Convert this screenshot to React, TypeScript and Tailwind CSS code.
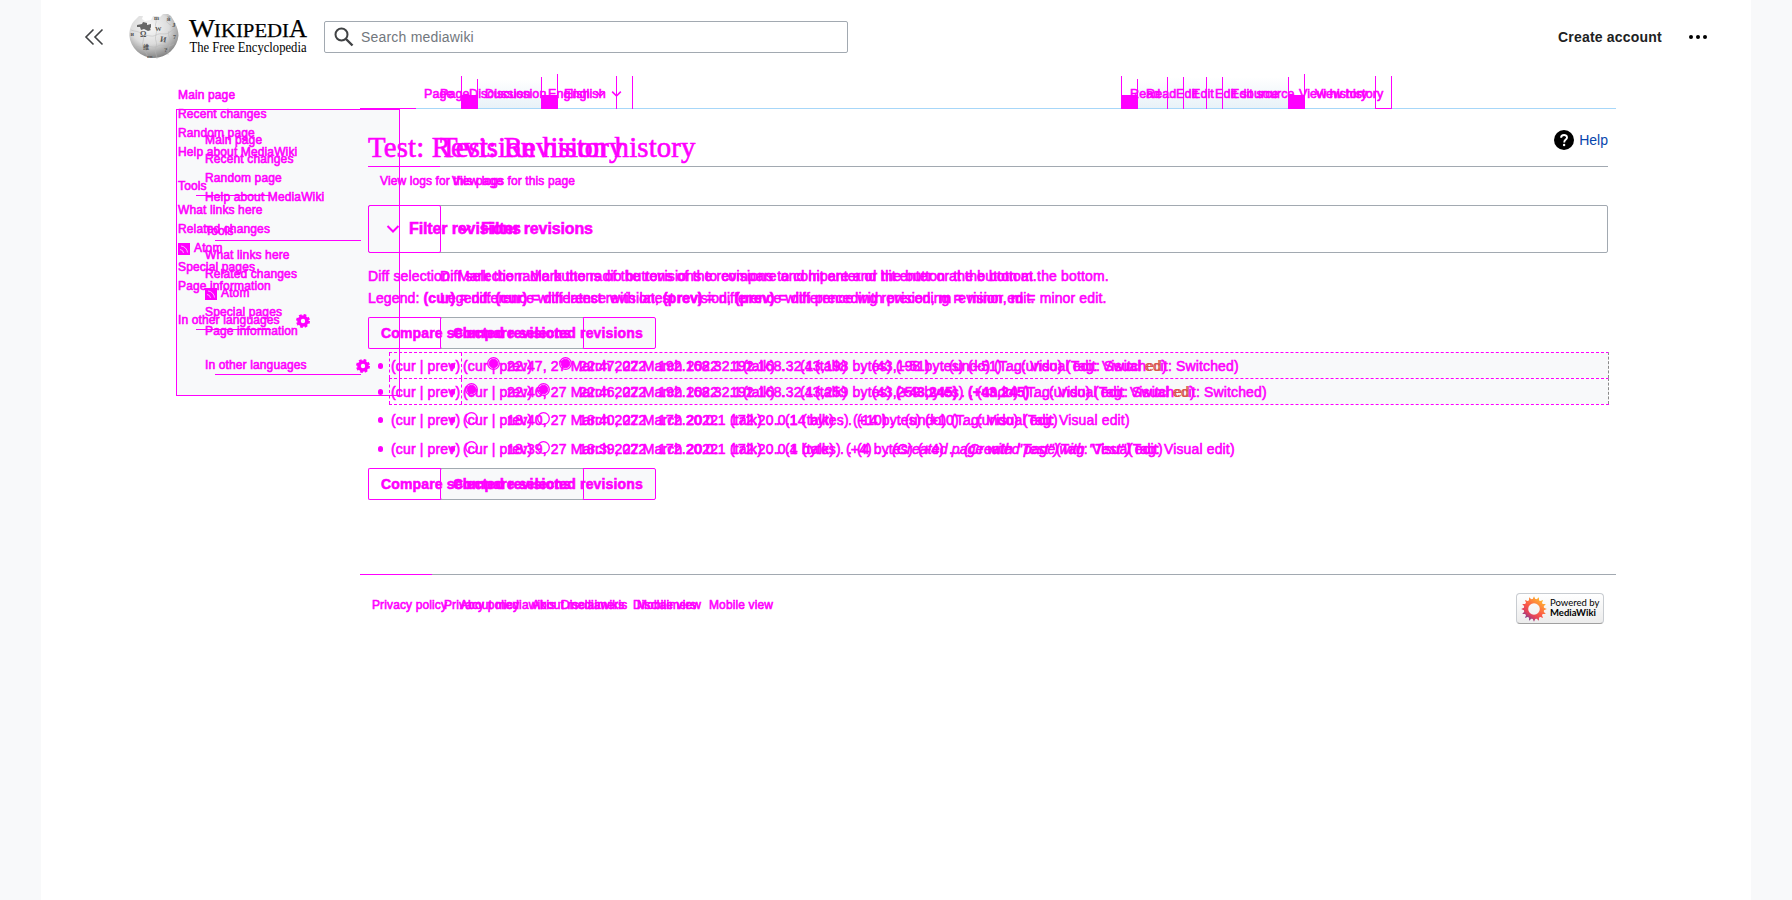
import React from "react";

const INK = "text-[#ff00ff] [-webkit-text-stroke:0.6px_#ff00ff] whitespace-pre";

function Stack({ children, className = "" }: { children: React.ReactNode; className?: string }) {
  return <div className={`grid [&>*]:col-start-1 [&>*]:row-start-1 ${className}`}>{children}</div>;
}

/* Draws the same content twice, the second copy moved right by the column shift. */
function Twice({ children, className = "" }: { children: React.ReactNode; className?: string }) {
  return (
    <Stack className={`${INK} ${className}`}>
      <div>{children}</div>
      <div className="ml-[72px]">{children}</div>
    </Stack>
  );
}

function Globe() {
  return (
    <svg width="50" height="48" viewBox="0 0 50 48" className="shrink-0">
      <defs>
        <radialGradient id="globe" cx="0.42" cy="0.3" r="0.7">
          <stop offset="0" stopColor="#f8f8f8" />
          <stop offset="0.55" stopColor="#dcdcdc" />
          <stop offset="1" stopColor="#858585" />
        </radialGradient>
      </defs>
      <path d="M5 8l5-5 4 0-1 3 3 2 6-1 2-4 4 0 3 1 3-3 5 0 3 2C45 8 49.500 15 49.500 22.500A24.700 24.700 0 0 1 .3 22.500C.3 16 2.500 11 5 8Z" fill="url(#globe)" />
      <path d="M8 12l5-1 1-2 4 1v2l4-1v3l-1 2 1 1-3 1-4-2-3 1-1-3-3 0Z" fill="#666" />
      <g fill="none" stroke="#b4b4b4" strokeWidth="0.5">
        <path d="M2 17c5 2 10 1 12 6s-3 9 1 14 3 6 4 8M14 23c6-2 8 2 13-1s9 1 14-3 4-3 7-3M27 22c-2 5 2 7 0 12s1 8 1 12M5 34c5-2 6 2 11 0s9 2 13-1 8 3 16-2M26 6c3 3-1 5 1 8s0 5 0 8M40 18c-2 6 3 8 1 13s-2 6-2 11M38 5c-2 3 1 6 4 7" />
      </g>
      <g fill="#555" fontFamily="Liberation Serif, serif" fontWeight="bold" fontSize="8">
        <text x="11" y="24">Ω</text>
        <text x="26" y="18" fontSize="6.500">W</text>
        <text x="31" y="29" fontSize="8" transform="rotate(10 34 27)">И</text>
        <text x="1.500" y="23" fontSize="6">и</text>
        <text x="43" y="14" fontSize="7">J</text>
        <text x="35" y="39" fontSize="7">?</text>
        <text x="44" y="26" fontSize="6">7</text>
        <text x="38" y="8" fontSize="6">й</text>
        <text x="25" y="7" fontSize="6">m</text>
        <text x="14" y="36" fontSize="6" fontFamily="Noto Sans CJK SC, sans-serif">维</text>
        <text x="18" y="45" fontSize="5">un</text>
      </g>
    </svg>
  );
}

function Wordmark() {
  return (
    <svg width="120" height="42" viewBox="0 0 120 42" className="ml-[10px] shrink-0 overflow-visible" fontFamily="Liberation Serif, serif" fill="#000">
      <g stroke="#000" strokeWidth="0.25">
        <text x="0" y="20.500" fontSize="24.500" textLength="26" lengthAdjust="spacingAndGlyphs">W</text>
        <text x="25" y="20.500" fontSize="18.500" textLength="75" lengthAdjust="spacingAndGlyphs">IKIPEDI</text>
        <text x="100" y="20.500" fontSize="24.500" textLength="18" lengthAdjust="spacingAndGlyphs">A</text>
      </g>
      <text x="0.500" y="35.500" fontSize="14" textLength="117" lengthAdjust="spacingAndGlyphs">The Free Encyclopedia</text>
    </svg>
  );
}

function Header() {
  return (
    <header className="flex h-[74px] items-center">
      <svg width="20" height="20" viewBox="0 0 20 20" fill="none" stroke="#404244" strokeWidth="1.600" className="ml-[43px] shrink-0">
        <path d="M9.500 2.500 2 10l7.500 7.500M18.500 2.500 11 10l7.500 7.500" />
      </svg>
      <div className="ml-[25px] flex items-center">
        <Globe />
        <Wordmark />
      </div>
      <div className="ml-[15px] flex h-8 w-[524px] shrink-0 items-center rounded-[2px] border border-[#a2a9b1] pl-[9px]">
        <svg width="20" height="20" viewBox="0 0 20 20" fill="none" stroke="#404244" strokeWidth="2">
          <circle cx="7.500" cy="7.500" r="6" />
          <path d="m12 12 6.500 6.500" strokeWidth="2.400" />
        </svg>
        <span className="ml-[7px] text-[14px] leading-5 tracking-[0.200px] text-[#72777d]">Search mediawiki</span>
      </div>
      <a className="ml-[710px] shrink-0 text-[14px] leading-5 font-bold tracking-[0.200px] whitespace-nowrap text-[#202122]">Create account</a>
      <svg width="20" height="20" viewBox="0 0 20 20" className="ml-[26px] shrink-0">
        <circle cx="3" cy="10" r="2" />
        <circle cx="10" cy="10" r="2" />
        <circle cx="17" cy="10" r="2" />
      </svg>
    </header>
  );
}

function Gear() {
  return (
    <svg width="14" height="14" viewBox="0 0 14 14" fill="none" stroke="#ff00ff">
      <circle cx="7" cy="7" r="4" strokeWidth="3.600" />
      <circle cx="7" cy="7" r="6" strokeWidth="2" strokeDasharray="2.700 2" />
    </svg>
  );
}

function Feed() {
  return (
    <svg width="12" height="12" viewBox="0 0 12 12" className="mr-1">
      <rect width="12" height="12" fill="#ff00ff" />
      <path d="M2 6.500A4 4 0 0 1 5.500 10M3 3a7 7 0 0 1 6.500 6.500" fill="none" stroke="#f8f9fa" strokeWidth="0.700" />
    </svg>
  );
}

function NavList({ gearGap }: { gearGap: string }) {
  return (
    <nav className={`text-[12px] leading-[19px] tracking-[0.130px] ${INK}`}>
      <div>Main page</div>
      <div>Recent changes</div>
      <div>Random page</div>
      <div>Help about MediaWiki</div>
      <div className="mt-[15px] mb-[5px]">Tools</div>
      <div>What links here</div>
      <div>Related changes</div>
      <div className="flex items-center"><Feed />Atom</div>
      <div>Special pages</div>
      <div>Page information</div>
      <div className="mt-[15px] flex items-center">
        <span>In other languages</span>
        <span className={gearGap}><Gear /></span>
      </div>
    </nav>
  );
}

function Sidebar() {
  return (
    <aside className="absolute top-[85px] left-[135px]">
      <Stack>
        <div className="mt-6 flex h-[287px] w-[224px] flex-col border border-[#ff00ff] bg-[#f8f9fa]">
          <div className="mt-[85px] ml-[19px] h-px w-[75px] bg-[#ff00ff]" />
          <div className="mt-[44px] ml-[38px] h-px w-[146px] bg-[#ff00ff]" />
          <div className="mt-[88px] ml-[19px] h-px w-[75px] bg-[#ff00ff]" />
          <div className="mt-[44px] ml-[38px] h-px w-[146px] bg-[#ff00ff]" />
        </div>
        <div className="mt-px ml-[2px]"><NavList gearGap="ml-[16px]" /></div>
        <div className="mt-[46px] ml-[29px]"><NavList gearGap="ml-[49px]" /></div>
      </Stack>
    </aside>
  );
}

function Cell({ w, h, fill = "" }: { w: string; h: string; fill?: string }) {
  return (
    <div className={`flex shrink-0 flex-col justify-end border-l border-[#ff00ff] ${w} ${h}`}>
      {fill === "solid" && <div className="h-[14px] bg-[#ff00ff]" />}
      {fill === "fade" && <div className="mb-px h-full bg-linear-to-b from-white to-[#e8f2f8]" />}
      {fill === "foot" && <div className="h-px bg-[#ff00ff]" />}
    </div>
  );
}

function Down({ className }: { className: string }) {
  return (
    <svg width="14" height="10" viewBox="0 0 14 10" fill="none" stroke="#ff00ff" strokeWidth="2" className={className}>
      <path d="m1.500 2 5.500 5.500L12.500 2" />
    </svg>
  );
}

function LeftLabels() {
  return (
    <div className="flex items-center text-[12.500px] leading-[16px] tracking-[0.100px]">
      <span className="w-[45px]">Page</span>
      <span className="w-[79px]">Discussion</span>
      <span>English</span>
      <Down className="ml-[5px] h-[8px] w-[11px]" />
    </div>
  );
}

function RightLabels() {
  return (
    <div className="flex text-[12.500px] leading-[16px] tracking-[0.100px]">
      <span className="w-[46px]">Read</span>
      <span className="w-[39px]">Edit</span>
      <span className="w-[82px]">Edit source</span>
      <span className="ml-0.5">View history</span>
    </div>
  );
}

function Tabs() {
  return (
    <div className="flex h-[35px] items-end">
      <Stack className="w-full">
        <div className="flex items-end">
          <div className="h-px w-[56px] bg-[#ff00ff]" />
          <div className="h-px flex-1 bg-[#a7d7f9]" />
        </div>
        <div className="flex items-end">
          <div className="ml-[101px] flex items-end">
            <Cell w="w-[16px]" h="h-[33px]" fill="solid" />
            <Cell w="w-[64px]" h="h-[30px]" fill="fade" />
            <Cell w="w-[16px]" h="h-[32px]" fill="solid" />
            <Cell w="w-[59px]" h="h-[35px]" />
            <Cell w="w-[16px]" h="h-[33px]" />
            <Cell w="w-[1px]" h="h-[33px]" />
          </div>
          <div className="ml-[488px] flex items-end">
            <Cell w="w-[16px]" h="h-[33px]" fill="solid" />
            <Cell w="w-[30px]" h="h-[30px]" fill="fade" />
            <Cell w="w-[16px]" h="h-[32px]" fill="fade" />
            <Cell w="w-[23px]" h="h-[32px]" fill="fade" />
            <Cell w="w-[16px]" h="h-[32px]" fill="fade" />
            <Cell w="w-[66px]" h="h-[32px]" fill="fade" />
            <Cell w="w-[16px]" h="h-[32px]" fill="solid" />
            <Cell w="w-[71px]" h="h-[35px]" />
            <Cell w="w-[16px]" h="h-[33px]" fill="foot" />
            <Cell w="w-[1px]" h="h-[33px]" />
          </div>
        </div>
        <Stack className={`items-start pt-[12px] pl-[64px] ${INK}`}>
          <LeftLabels />
          <div className="ml-[16px]"><LeftLabels /></div>
        </Stack>
        <Stack className={`items-start pt-[12px] pl-[770px] ${INK}`}>
          <RightLabels />
          <div className="ml-[16px]"><RightLabels /></div>
        </Stack>
      </Stack>
    </div>
  );
}

function Rule({ w }: { w: string }) {
  return (
    <div className="flex h-px">
      <div className="w-[72px] bg-[#ff00ff]" />
      <div className={`bg-[#a2a9b1] ${w}`} />
    </div>
  );
}

function CompareButton() {
  return (
    <Stack className={`h-[32px] text-[14px] leading-[30px] font-bold tracking-[0.150px] ${INK}`}>
      <div className="ml-[72px] w-[216px] rounded-[2px] border border-[#ff00ff] bg-[#f8f9fa]" />
      <div className="ml-[73px] w-[142px] border-y border-[#a2a9b1]" />
      <div className="w-[216px] rounded-[2px] border border-[#ff00ff] border-y-transparent">
        <span className="ml-3">Compare selected revisions</span>
      </div>
      <div className="w-[73px] rounded-l-[2px] border-y border-[#ff00ff]" />
      <div className="pt-px pl-[85px]">Compare selected revisions</div>
    </Stack>
  );
}

type Part = { text: string; w: string };
type Revision = { radio: string; filled: boolean; parts: Part[]; switched: boolean; height: string };

const REVISIONS: Revision[] = [
  {
    radio: "ml-[25px] mr-[7px] mb-[5px]", filled: true, switched: true, height: "h-[26px]",
    parts: [
      { text: "22:47, 27 March 2022", w: "w-[151px]" },
      { text: "192.168.32.1", w: "w-[85px]" },
      { text: "(talk)", w: "w-[38px]" },
      { text: ". .", w: "w-[19px]" },
      { text: "(43,198 bytes)", w: "w-[96px]" },
      { text: "(−51)", w: "w-[37px]" },
      { text: ". .", w: "w-[16px]" },
      { text: "(undo)", w: "w-[45px]" },
    ],
  },
  {
    radio: "ml-[3px] mr-[29px] mb-[5px]", filled: true, switched: true, height: "h-[26px]",
    parts: [
      { text: "22:46, 27 March 2022", w: "w-[151px]" },
      { text: "192.168.32.1", w: "w-[85px]" },
      { text: "(talk)", w: "w-[38px]" },
      { text: ". .", w: "w-[19px]" },
      { text: "(43,259 bytes)", w: "w-[96px]" },
      { text: "(+43,245)", w: "w-[65px] font-bold" },
      { text: ". .", w: "w-[16px]" },
      { text: "(undo)", w: "w-[45px]" },
    ],
  },
  {
    radio: "ml-[3px] mr-[29px] mb-[3px]", filled: false, switched: false, height: "h-[29px]",
    parts: [
      { text: "18:40, 27 March 2022", w: "w-[151px]" },
      { text: "172.20.0.1", w: "w-[72px]" },
      { text: "(talk)", w: "w-[38px]" },
      { text: ". .", w: "w-[17px]" },
      { text: "(14 bytes)", w: "w-[68px]" },
      { text: "(+10)", w: "w-[37px]" },
      { text: ". .", w: "w-[15px]" },
      { text: "(undo)", w: "w-[46px]" },
    ],
  },
  {
    radio: "ml-[3px] mr-[29px] mb-[3px]", filled: false, switched: false, height: "h-[29px]",
    parts: [
      { text: "18:39, 27 March 2022", w: "w-[151px]" },
      { text: "172.20.0.1", w: "w-[72px]" },
      { text: "(talk)", w: "w-[38px]" },
      { text: ". .", w: "w-[17px]" },
      { text: "(4 bytes)", w: "w-[61px]" },
      { text: "(+4)", w: "w-[31px]" },
      { text: ". .", w: "w-[15px]" },
      { text: "(Created page with \"Test\")", w: "w-[164px] italic" },
    ],
  },
];

function Unchanged({ children }: { children: React.ReactNode }) {
  return <span className="text-[#d9534f] [-webkit-text-stroke:0px]">{children}</span>;
}

function Tag({ switched, second }: { switched: boolean; second: boolean }) {
  if (!switched) return <span>(Tag: Visual edit)</span>;
  return second
    ? <span>(Tag: Visual <Unchanged>ed</Unchanged>it: Switched)</span>
    : <span>(Tag: Visual edit: Switch<Unchanged>ed</Unchanged>)</span>;
}

function Radio({ filled, className }: { filled: boolean; className: string }) {
  return (
    <svg width="13" height="13" viewBox="0 0 13 13" fill="none" stroke="#ff00ff" className={`shrink-0 ${className}`}>
      <circle cx="6.500" cy="6.500" r="5.800" strokeWidth="1.300" />
      {filled && <circle cx="6.500" cy="6.500" r="4.300" fill="#ff00ff" />}
    </svg>
  );
}

function RevisionLine({ rev, second }: { rev: Revision; second: boolean }) {
  return (
    <div className={`flex items-center ${rev.height}`}>
      <span className="ml-[10px] h-[6px] w-[5px] rounded-full bg-[#ff00ff]" />
      <span className="ml-[8px] w-[71px]">(cur | prev)</span>
      <Radio filled={rev.filled} className={rev.radio} />
      {rev.parts.map((p, i) => (
        <span key={i} className={`shrink-0 ${p.w}`}>{p.text}</span>
      ))}
      <Tag switched={rev.switched} second={second} />
    </div>
  );
}

function DashedBand() {
  return (
    <div className="ml-[21px] flex h-[26px] w-[1220px] border-t border-r border-dashed border-t-[#ff00ff] border-r-[#8a8a8a]">
      <div className="w-[72px] border-l border-dashed border-[#ff00ff]" />
      <div className="flex-1 border-l border-dashed border-[#ff00ff] bg-[#f8f9fa]" />
    </div>
  );
}

function History() {
  return (
    <Stack className={`mt-[3px] h-[116px] text-[14px] leading-5 tracking-[0.150px] ${INK}`}>
      <div>
        <DashedBand />
        <DashedBand />
        <div className="ml-[21px] w-[1220px] border-t border-dashed border-[#ff00ff]" />
      </div>
      <div className="pt-px">
        {REVISIONS.map((rev, i) => <RevisionLine key={i} rev={rev} second={false} />)}
      </div>
      <div className="ml-[72px] pt-px">
        {REVISIONS.map((rev, i) => <RevisionLine key={i} rev={rev} second />)}
      </div>
    </Stack>
  );
}

function Sunflower() {
  const petals = Array.from({ length: 16 }, (_, i) => i * 22.5);
  return (
    <svg width="26" height="26" viewBox="-13 -13 26 26">
      <defs>
        <linearGradient id="sun" gradientUnits="userSpaceOnUse" x1="8" y1="-9" x2="-7" y2="11">
          <stop offset="0" stopColor="#ffb52e" />
          <stop offset="0.5" stopColor="#fb5a48" />
          <stop offset="0.75" stopColor="#e0405c" />
          <stop offset="1" stopColor="#6a3f9c" />
        </linearGradient>
        <mask id="petals" maskUnits="userSpaceOnUse" x="-13" y="-13" width="26" height="26">
          {petals.map((a) => <path key={a} d="M-2.600-7 0-12.800 2.600-7Z" fill="#fff" transform={`rotate(${a})`} />)}
          <circle r="8" fill="none" stroke="#fff" strokeWidth="4.400" />
        </mask>
      </defs>
      <rect x="-13" y="-13" width="26" height="26" fill="url(#sun)" mask="url(#petals)" />
    </svg>
  );
}

function Footer() {
  return (
    <footer>
      <Rule w="w-[1184px]" />
      <div className="flex items-start justify-between pr-[12px] pl-[12px]">
        <Twice className="mt-[21px] text-[12px] leading-[18px] tracking-[0.120px]">
          <div className="flex">
            <span className="w-[88px]">Privacy policy</span>
            <span className="w-[101px]">About mediawikis</span>
            <span className="w-[76px]">Disclaimers</span>
            <span>Mobile view</span>
          </div>
        </Twice>
        <div className="mt-[18px] flex h-[31px] w-[88px] items-center rounded-[4px] border border-[#c8ccd1] border-b-[#a0a0a0] bg-linear-to-b from-white to-[#ececec] pl-[4px]">
          <Sunflower />
          <div className="ml-[3px] pb-px font-['Lato',sans-serif] text-[9.500px] leading-[10px] whitespace-nowrap text-black">
            <div>Powered by</div>
            <div className="font-bold">MediaWiki</div>
          </div>
        </div>
      </div>
    </footer>
  );
}

export default function App() {
  return (
    <div className="h-[900px] w-[1792px] overflow-hidden bg-[#f8f9fa] font-['Liberation_Sans',Arial,sans-serif]">
      <div className="relative mx-auto h-full w-[1710px] bg-white">
        <Header />
        <Sidebar />
        <main className="relative ml-[319px] w-[1256px]">
          <Tabs />
          <div className="px-2">
            <div className="flex h-[57px] items-start justify-between">
              <Twice className="pt-[20px] font-['Liberation_Serif',serif] text-[28.800px] leading-[36px] tracking-[0.150px]">Test: Revision history</Twice>
              <div className="mt-[21px] flex h-5 items-center text-[14px] leading-5 text-[#0645ad]">
                <svg width="20" height="20" viewBox="0 0 20 20" className="mr-[5px]">
                  <circle cx="10" cy="10" r="10" />
                  <path d="M7.100 7.700c0-3.600 5.900-3.400 5.900-.3 0 2.200-2.800 2.200-2.800 5" fill="none" stroke="#fff" strokeWidth="1.900" />
                  <circle cx="10.100" cy="15" r="1.200" fill="#fff" />
                </svg>
                Help
              </div>
            </div>
            <Rule w="w-[1168px]" />
            <Twice className="h-[38px] pt-[5px] pl-[12px] text-[12px] leading-[18px] tracking-[0.110px]">View logs for this page</Twice>
            <Stack className="h-[48px]">
              <div className="rounded-[2px] border border-[#a2a9b1]" />
              <div className="w-[73px] rounded-[2px] border border-[#ff00ff]" />
              <Twice className="text-[16px] leading-[48px] font-bold tracking-[-0.120px]">
                <div className="flex items-center">
                  <Down className="mr-[9px] ml-[18px]" />
                  Filter revisions
                </div>
              </Twice>
            </Stack>
            <Twice className="mt-[13px] text-[14px] leading-[20px] tracking-[0.148px]">
              Diff selection: Mark the radio buttons of the revisions to compare and hit enter or the button at the bottom.
            </Twice>
            <Twice className="mt-[2px] mb-[9px] text-[14px] leading-[20px] tracking-[0.125px]">
              Legend: <b>(cur)</b> = difference with latest revision, <b>(prev)</b> = difference with preceding revision, <b>m</b> = minor edit.
            </Twice>
            <CompareButton />
            <History />
            <CompareButton />
          </div>
          <div className="h-[74px]" />
          <Footer />
        </main>
      </div>
    </div>
  );
}
